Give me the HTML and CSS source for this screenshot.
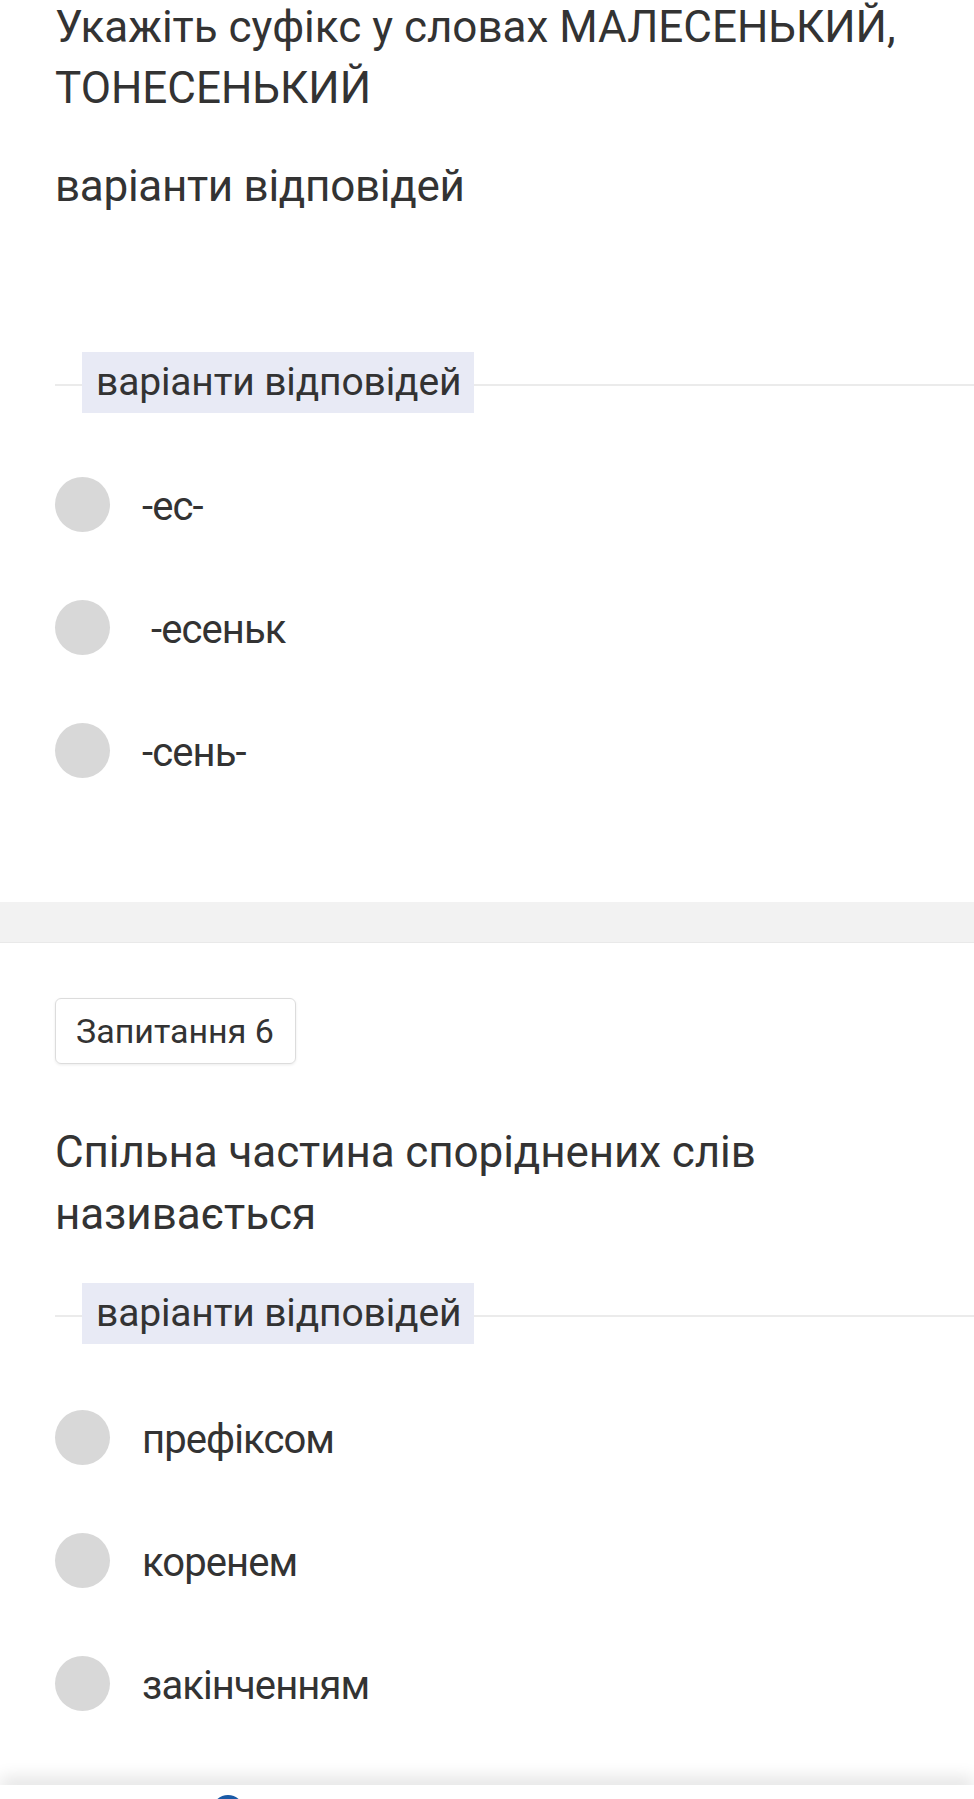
FILE: index.html
```html
<!DOCTYPE html>
<html lang="uk">
<head>
    <meta charset="UTF-8">
    <meta name="viewport" content="width=device-width, initial-scale=1.0">
    <title>Тест</title>
    <link rel="stylesheet" href="styles.css">
</head>
<body>

<div class="question">
    <p class="question-text first">Укажіть суфікс у словах МАЛЕСЕНЬКИЙ, ТОНЕСЕНЬКИЙ</p>
    <p class="question-note">варіанти відповідей</p>

    <!-- блок з варіантами -->
    <div class="answers-head">
        <span class="line-start"></span>
        <span class="answers-label">варіанти відповідей</span>
        <span class="line-end"></span>
    </div>
    <ul class="options">
        <li><span class="radio"></span><span class="option-text">-ес-</span></li>
        <li><span class="radio"></span><span class="option-text">&nbsp;-есеньк</span></li>
        <li><span class="radio"></span><span class="option-text">-сень-</span></li>
    </ul>
</div>

<div class="divider"></div>

<div class="question">
    <div class="question-number">Запитання 6</div>
    <p class="question-text second">Спільна частина споріднених слів називається</p>

    <div class="answers-head small-gap">
        <span class="line-start"></span>
        <span class="answers-label">варіанти відповідей</span>
        <span class="line-end"></span>
    </div>
    <ul class="options">
        <li><span class="radio"></span><span class="option-text">префіксом</span></li>
        <li><span class="radio"></span><span class="option-text">коренем</span></li>
        <li><span class="radio"></span><span class="option-text">закінченням</span></li>
    </ul>
</div>

<div class="bottom-bar">
    <span class="bar-icon"></span>
</div>

</body>
</html>
```

FILE: styles.css
```css
body {
    font-family: Roboto, "Noto Sans", Arial, sans-serif;
    margin: 0;
    padding: 0;
    background: #fff;
    color: #333;
}
.question {
    padding: 0 30px 0 55px;
}
.question-text {
    font-size: 44px;
    line-height: 61px;
    margin: 0;
}
.question-text.first {
    margin-top: -3px;
}
.question-text.second {
    margin-top: 57px;
    line-height: 62px;
    letter-spacing: -0.1px;
}
.question-note {
    font-size: 44px;
    letter-spacing: -0.3px;
    line-height: 61px;
    margin: 37px 0 0;
}
.answers-head {
    display: flex;
    align-items: center;
    margin: 135px -30px 0 0;
    height: 61px;
}
.answers-head.small-gap {
    margin-top: 38px;
}
.line-start,
.line-end {
    height: 2px;
    background: #ebebeb;
    margin-top: 5px;
}
.line-start {
    width: 27px;
}
.line-end {
    flex: 1;
}
.answers-label {
    background: #e8eaf5;
    font-size: 39px;
    letter-spacing: -0.15px;
    line-height: 61px;
    padding: 0 13px 0 14px;
}
.options {
    list-style: none;
    margin: 64px 0 0;
    padding: 0;
    display: flex;
    flex-direction: column;
    gap: 68px;
}
.small-gap + .options {
    margin-top: 66px;
}
.options li {
    display: flex;
    align-items: center;
    height: 55px;
}
.radio {
    width: 55px;
    height: 55px;
    border-radius: 50%;
    background: #d8d8d8;
    flex-shrink: 0;
}
.option-text {
    font-size: 40px;
    letter-spacing: -0.9px;
    line-height: 55px;
    padding-top: 3px;
    margin-left: 32px;
}
.divider {
    margin-top: 124px;
    height: 40px;
    background: #f2f2f2;
    border-bottom: 1px solid #e9e9e9;
}
.question-number {
    display: inline-block;
    margin-top: 55px;
    height: 64px;
    line-height: 64px;
    padding: 0 21px 0 20px;
    font-size: 34px;
    border: 1px solid #dcdcdc;
    border-radius: 6px;
    box-shadow: 0 1px 3px rgba(0,0,0,0.08);
}
.bottom-bar {
    position: fixed;
    left: 0;
    right: 0;
    bottom: 0;
    height: 14px;
    background: #fff;
    box-shadow: 0 -6px 18px rgba(0,0,0,0.14);
    overflow: hidden;
}
.bar-icon {
    position: absolute;
    left: 212px;
    top: 10px;
    width: 32px;
    height: 32px;
    border-radius: 50%;
    background: #1a5aa6;
}
```
